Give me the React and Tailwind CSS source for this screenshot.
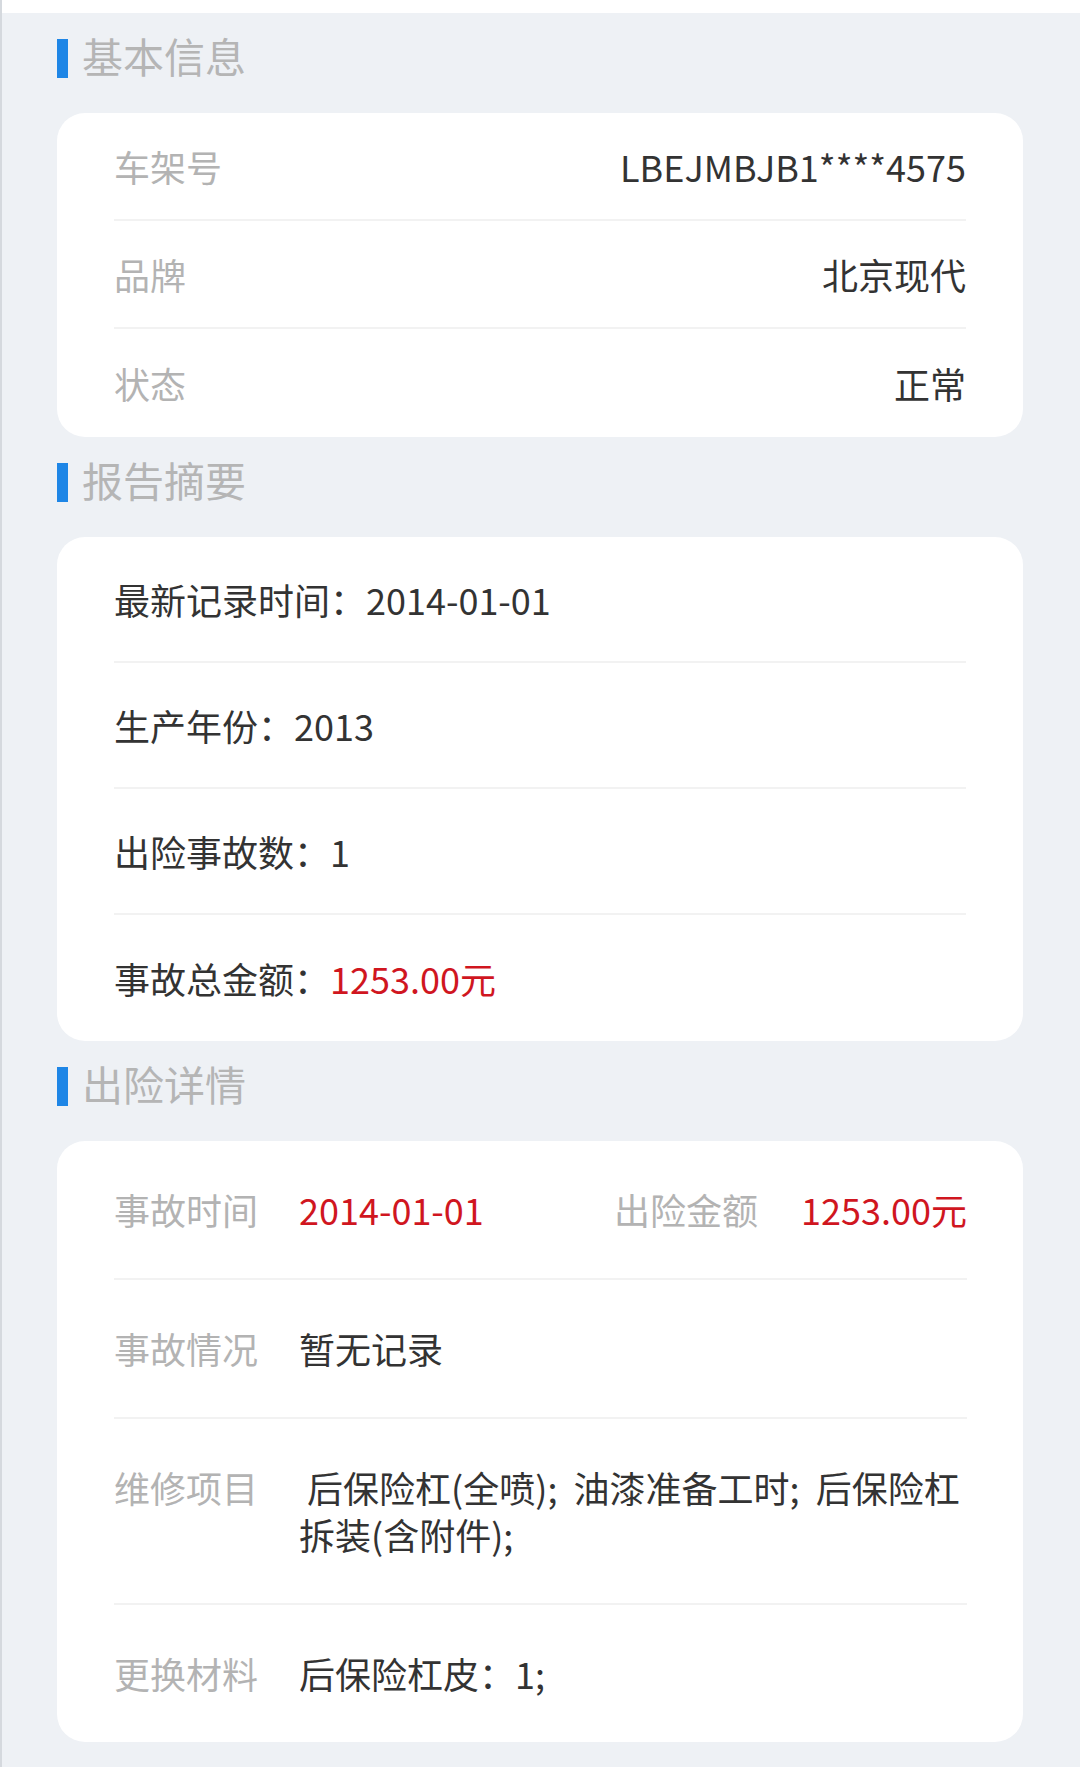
export default function App() {
  const basic = [
    { label: '车架号', value: 'LBEJMBJB1****4575' },
    { label: '品牌', value: '北京现代' },
    { label: '状态', value: '正常' },
  ]

  return (
    <div
      className="min-h-screen bg-[#eef1f5] border-l-2 border-[#d5d9de] text-[36px] text-[#333333]"
      style={{ fontFamily: '"Noto Sans CJK SC", "Noto Sans", sans-serif' }}
    >
      <div className="h-[13px] bg-white" />

      <div className="pl-[55px] pr-[57px]">
        <Heading title="基本信息" />
        <div className="bg-white rounded-[28px] px-[57px]">
          {basic.map((row, i) => (
            <div
              key={row.label}
              className={`h-[108px] flex items-center justify-between ${i < basic.length - 1 ? 'border-b-2 border-[#f2f2f2]' : ''}`}
            >
              <span className="text-[#b3b3b3]">{row.label}</span>
              <span>{row.value}</span>
            </div>
          ))}
        </div>

        <Heading title="报告摘要" />
        <div className="bg-white rounded-[28px] px-[57px]">
          <div className="h-[126px] flex items-center border-b-2 border-[#f2f2f2]">最新记录时间：2014-01-01</div>
          <div className="h-[126px] flex items-center border-b-2 border-[#f2f2f2]">生产年份：2013</div>
          <div className="h-[126px] flex items-center border-b-2 border-[#f2f2f2]">出险事故数：1</div>
          <div className="h-[126px] flex items-center">
            事故总金额：<span className="text-[#d0161f]">1253.00元</span>
          </div>
        </div>

        <Heading title="出险详情" />
        <div className="bg-white rounded-[28px] pl-[57px] pr-[50px]">
          <div className="flex py-[45px] leading-[47px] border-b-2 border-[#f2f2f2] mr-[6px]">
            <div className="w-[500px] flex shrink-0">
              <span className="w-[185px] shrink-0 text-[#b3b3b3]">事故时间</span>
              <span className="text-[#d0161f]">2014-01-01</span>
            </div>
            <div className="flex-1 flex justify-between">
              <span className="text-[#b3b3b3]">出险金额</span>
              <span className="text-[#d0161f]">1253.00元</span>
            </div>
          </div>
          <DetailRow label="事故情况" value="暂无记录" />
          <DetailRow
            label="维修项目"
            value={'\u00a0后保险杠(全喷);\u00a0 油漆准备工时;\u00a0 后保险杠拆装(含附件);'}
          />
          <DetailRow label="更换材料" value="后保险杠皮：1;" last />
        </div>

        <Heading title="维保记录" />
      </div>
    </div>
  )
}

function Heading({ title }) {
  return (
    <div className="flex items-center pt-[26px] pb-[35px]">
      <div className="w-[11px] h-[39px] bg-[#1e86e6]" />
      <span className="ml-[14px] -mt-[7px] text-[41px] leading-[38px] text-[#b5b5b5]">{title}</span>
    </div>
  )
}

function DetailRow({ label, value, last }) {
  return (
    <div className={`flex py-[45px] leading-[47px] mr-[6px] ${last ? '' : 'border-b-2 border-[#f2f2f2]'}`}>
      <span className="w-[185px] shrink-0 text-[#b3b3b3]">{label}</span>
      <span className="flex-1 -mr-[6px]">{value}</span>
    </div>
  )
}
